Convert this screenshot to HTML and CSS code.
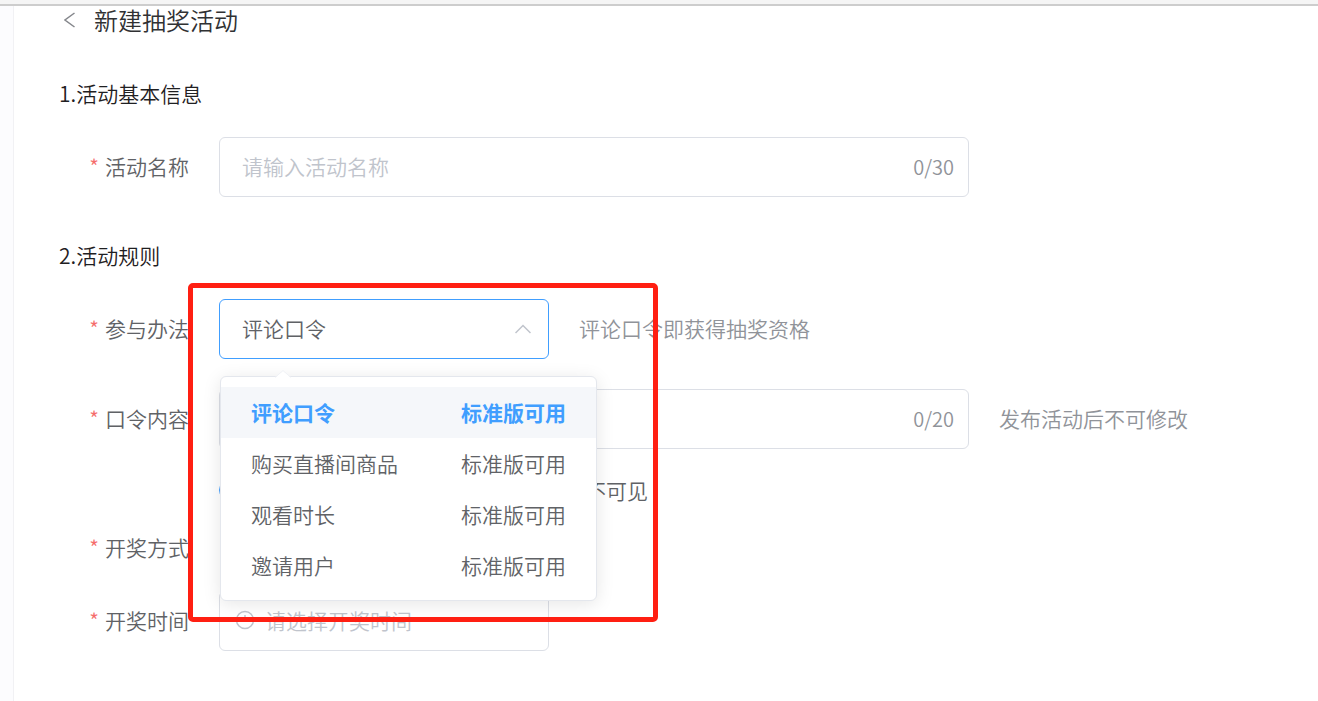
FILE: index.html
```html
<!DOCTYPE html>
<html lang="zh-CN">
<head>
<meta charset="utf-8">
<title>新建抽奖活动</title>
<link rel="stylesheet" href="styles.css">
</head>
<body>
<div class="topbar"></div>
<div class="shell">
  <aside class="rail"></aside>
  <main class="page">
    <header class="page-head">
      <button class="back" type="button" aria-label="返回">
        <svg width="12" height="16" viewBox="0 0 12 16" fill="none" stroke="#85878c" stroke-width="1.5"><path d="M10.500 1 1 8l9.500 7"/></svg>
      </button>
      <h1 class="title">新建抽奖活动</h1>
    </header>
    <form class="form">
      <h2 class="section">1.活动基本信息</h2>
      <div class="row">
        <label class="label" for="name">活动名称</label>
        <div class="control wide">
          <input class="box" id="name" type="text" placeholder="请输入活动名称">
          <span class="count">0/30</span>
        </div>
      </div>
      <h2 class="section second">2.活动规则</h2>
      <div class="row">
        <label class="label" for="method">参与办法</label>
        <div class="control narrow">
          <select class="box active" id="method"><option>评论口令</option></select>
          <svg class="chevron" width="16" height="10" viewBox="0 0 16 10" fill="none" stroke="#c0c4cc" stroke-width="1.5"><path d="M.5 9 8 1.5 15.500 9"/></svg>
          <div class="menu" role="listbox">
            <svg class="arrow" width="18" height="8" viewBox="0 0 18 8"><path d="M1 8 9 1 17 8z" fill="#fff"/><path d="M1 7.500 9 .5 17 7.500" fill="none" stroke="#f0f2f6"/></svg>
            <button class="item selected" type="button" role="option" aria-selected="true"><span>评论口令</span><span>标准版可用</span></button>
            <button class="item" type="button" role="option"><span>购买直播间商品</span><span>标准版可用</span></button>
            <button class="item" type="button" role="option"><span>观看时长</span><span>标准版可用</span></button>
            <button class="item" type="button" role="option"><span>邀请用户</span><span>标准版可用</span></button>
          </div>
          <div class="marker"></div>
        </div>
        <span class="hint">评论口令即获得抽奖资格</span>
      </div>
      <div class="row spaced">
        <label class="label" for="phrase">口令内容</label>
        <div class="control wide">
          <input class="box" id="phrase" type="text">
          <span class="count">0/20</span>
        </div>
        <span class="hint">发布活动后不可修改</span>
      </div>
      <div class="row radio-row">
        <span></span>
        <div class="radios">
          <input class="radio" id="hidden" type="radio" name="visible" checked>
          <label class="radio-text" for="hidden">不可见</label>
        </div>
      </div>
      <div class="row text-row">
        <span class="label">开奖方式</span>
      </div>
      <div class="row text-row">
        <label class="label" for="time">开奖时间</label>
        <div class="control narrow">
          <svg class="clock" width="20" height="20" viewBox="0 0 20 20" fill="none" stroke="#c0c4cc" stroke-width="1.500"><circle cx="10" cy="10" r="8.500"/><path d="M10 5v5.500h4.500"/></svg>
          <input class="box dated" id="time" type="text" placeholder="请选择开奖时间">
        </div>
      </div>
    </form>
  </main>
</div>
</body>
</html>
```
FILE: styles.css
```css
* { box-sizing: border-box; }
body {
  margin: 0;
  min-height: 100vh;
  display: flex;
  flex-direction: column;
  background: #fff;
  color: #606266;
  font: 350 21px/30px "Noto Sans CJK SC", sans-serif;
}
button, input, select { font: inherit; color: inherit; }
.topbar {
  height: 6px;
  background: #f5f5f5;
  border-bottom: 2px solid #cdcdcd;
}
.shell { flex: 1; display: flex; }
.rail {
  width: 14px;
  background: #fcfcfe;
  border-right: 1px solid #f1f1f4;
}
.page { flex: 1; padding-left: 45px; }
.page-head {
  display: flex;
  align-items: center;
  height: 30px;
  padding-bottom: 2px;
}
.back {
  display: flex;
  width: 35px;
  padding: 0 0 0 5px;
  border: 0;
  background: none;
}
.title { margin: 0; font-size: 24px; font-weight: 350; color: #303133; }
.section {
  margin: 41px 0 28px;
  font-size: 21px;
  line-height: 32px;
  font-weight: 350;
  color: #1f2022;
}
.section.second { margin-top: 42px; }
.row {
  display: grid;
  grid-template-columns: 130px auto 1fr;
  column-gap: 30px;
  align-items: center;
}
.row.spaced { margin-top: 30px; }
.row.radio-row { margin-top: 26px; }
.row.text-row { margin-top: 27px; }
.label { padding-bottom: 2px; text-align: right; white-space: nowrap; }
.label::before { content: "*"; margin-right: 6px; color: #f56c6c; }
.control { position: relative; }
.wide { width: 750px; }
.narrow { width: 330px; }
.box {
  display: block;
  width: 100%;
  height: 60px;
  padding: 0 22px 2px;
  border: 1px solid #dcdfe6;
  border-radius: 6px;
  background: #fff;
  appearance: none;
  outline: none;
}
.box::placeholder { color: #c0c4cc; opacity: 1; }
.box.active { border-color: #409eff; }
.box.dated { padding-left: 45px; }
.count {
  position: absolute;
  right: 15px;
  top: 15px;
  font-size: 20px;
  color: #909399;
}
.chevron { position: absolute; right: 18px; top: 25px; }
.clock { position: absolute; left: 16px; top: 19px; }
.hint { padding-bottom: 2px; color: #909399; white-space: nowrap; }
.radios { display: flex; align-items: center; }
.radio {
  appearance: none;
  width: 20px;
  height: 20px;
  margin: 0;
  border: 6px solid #409eff;
  border-radius: 50%;
}
.radio-text { padding-left: 346px; white-space: nowrap; }
.menu {
  position: absolute;
  z-index: 2;
  top: 77px;
  left: 1px;
  width: 377px;
  padding: 10px 0 9px;
  border: 1px solid #e4e7ed;
  border-radius: 6px;
  background: #fff;
  box-shadow: 0 3px 18px rgba(0, 0, 0, .1);
}
.arrow { position: absolute; top: -7px; left: 53px; }
.item {
  display: flex;
  justify-content: space-between;
  align-items: center;
  width: 100%;
  height: 51px;
  padding: 0 30px 2px;
  border: 0;
  background: none;
}
.item.selected { background: #f5f7fa; color: #409eff; font-weight: 700; }
.marker {
  position: absolute;
  z-index: 3;
  top: -16px;
  left: -31px;
  width: 470px;
  height: 339px;
  border: 5px solid #ff1f12;
  border-radius: 5px;
  pointer-events: none;
}
```
